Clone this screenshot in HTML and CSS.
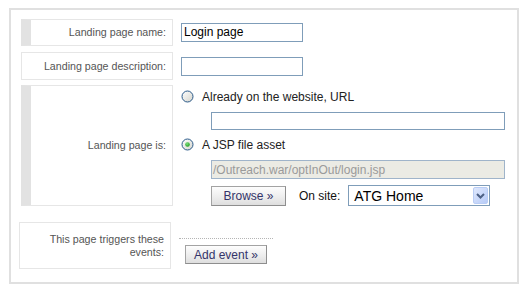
FILE: index.html
```html
<!DOCTYPE html>
<html>
<head>
<meta charset="utf-8">
<link rel="stylesheet" href="styles.css">
</head>
<body>
<div class="panel">
  <div class="row r1">
    <div class="label req">Landing page name:</div>
    <div class="field"><div class="input name">Login page</div></div>
  </div>
  <div class="row r2">
    <div class="label">Landing page description:</div>
    <div class="field"><div class="input name"></div></div>
  </div>
  <div class="row r3">
    <div class="label req">Landing page is:</div>
    <div class="field stack">
      <div class="radio-line">
        <svg class="radio" width="13" height="13" viewBox="0 0 13 13">
          <defs>
            <linearGradient id="rg1" x1="0" y1="0" x2="1" y2="1">
              <stop offset="0" stop-color="#ffffff"/>
              <stop offset="1" stop-color="#d4d4cc"/>
            </linearGradient>
          </defs>
          <circle cx="6.5" cy="6.5" r="5.5" fill="url(#rg1)" stroke="#2a5a8a" stroke-width="1"/>
        </svg>
        <span>Already on the website, URL</span>
      </div>
      <div class="input wide"></div>
      <div class="radio-line second">
        <svg class="radio" width="13" height="13" viewBox="0 0 13 13">
          <defs>
            <linearGradient id="rg2" x1="0" y1="0" x2="1" y2="1">
              <stop offset="0" stop-color="#ffffff"/>
              <stop offset="1" stop-color="#d4d4cc"/>
            </linearGradient>
            <radialGradient id="dot" cx="0.4" cy="0.35" r="0.7">
              <stop offset="0" stop-color="#7ee07e"/>
              <stop offset="1" stop-color="#1e9a1e"/>
            </radialGradient>
          </defs>
          <circle cx="6.5" cy="6.5" r="5.5" fill="url(#rg2)" stroke="#2a5a8a" stroke-width="1"/>
          <circle cx="6.5" cy="6.5" r="2.3" fill="url(#dot)"/>
        </svg>
        <span>A JSP file asset</span>
      </div>
      <div class="input wide disabled">/Outreach.war/optInOut/login.jsp</div>
      <div class="browse-line">
        <div class="btn browse">Browse &raquo;</div>
        <span class="onsite">On site:</span>
        <div class="select">
          <span class="sel-text">ATG Home</span>
          <span class="sel-btn">
            <svg width="9" height="6" viewBox="0 0 9 6"><path d="M1 1 L4.5 4.5 L8 1" fill="none" stroke="#4d6185" stroke-width="2"/></svg>
          </span>
        </div>
      </div>
    </div>
  </div>
  <div class="row r4">
    <div class="label">This page triggers these events:</div>
    <div class="field stack events">
      <div class="dots"></div>
      <div class="btn add">Add event &raquo;</div>
    </div>
  </div>
</div>
</body>
</html>
```
FILE: styles.css
```css
html, body {
  margin: 0;
  padding: 0;
  background: #ffffff;
}

body {
  font-family: "Liberation Sans", Arial, sans-serif;
  font-size: 12px;
  color: #222;
}

.panel {
  margin: 8px 11px 0 9px;
  border: 2px solid #e0e0e0;
  padding: 9px 10px 11px 10px;
  height: 252px;
  box-sizing: content-box;
}

.row {
  display: flex;
  align-items: stretch;
}

.r1 { height: 27px; }
.r2 { height: 28px; margin-top: 6px; }
.r3 { margin-top: 5px; }
.r4 { height: 47px; margin-top: 16px; margin-left: -2px; }

.label {
  width: 152px;
  flex: none;
  box-sizing: border-box;
  border: 1px solid #e6e6e6;
  display: flex;
  align-items: center;
  justify-content: flex-end;
  text-align: right;
  padding: 0 6px 0 8px;
  font-size: 10.67px;
  line-height: 13px;
  color: #555;
}

.label.req {
  border-left: 10px solid #e2e2e2;
}

.field {
  margin-left: 8px;
  display: flex;
  align-items: center;
}

.stack {
  flex-direction: column;
  align-items: flex-start;
}

.r3 .field {
  padding-top: 4px;
  height: 117px;
}

.input {
  box-sizing: border-box;
  height: 19px;
  border: 1px solid #7f9db9;
  background: #fff;
  font-size: 12px;
  line-height: 17px;
  padding: 0 2px;
  color: #000;
  white-space: nowrap;
  overflow: hidden;
}

.input.name {
  width: 122px;
}

.input.wide {
  width: 294px;
  margin-left: 30px;
  margin-top: 7px;
}

.input.disabled {
  background: #ebebe4;
  border-color: #9fb4ca;
  color: #9a9a9a;
  padding-left: 1px;
  height: 20px;
  line-height: 18px;
}

.radio-line {
  display: flex;
  align-items: center;
  height: 16px;
  font-size: 12px;
  color: #222;
}

.radio-line.second {
  margin-top: 7px;
}

.radio {
  display: block;
  margin-right: 8px;
}

.browse-line {
  display: flex;
  align-items: center;
  margin-left: 30px;
  margin-top: 6px;
  height: 21px;
}

.btn {
  box-sizing: border-box;
  display: flex;
  align-items: center;
  justify-content: center;
  border: 1px solid #a3a3a3;
  border-right-color: #8e8e8e;
  border-bottom-color: #8e8e8e;
  background: linear-gradient(#fdfdfd, #ececec 60%, #dedede);
  font-size: 12px;
  color: #34346a;
  white-space: nowrap;
}

.btn.browse {
  width: 75px;
  height: 20px;
}

.onsite {
  margin-left: 13px;
  color: #111;
}

.select {
  margin-left: 8px;
  width: 142px;
  height: 21px;
  box-sizing: border-box;
  border: 1px solid #7f9db9;
  display: flex;
  align-items: center;
  justify-content: space-between;
  background: #fff;
}

.sel-text {
  font-size: 14px;
  color: #000;
  padding-left: 5px;
}

.sel-btn {
  width: 15px;
  height: 17px;
  margin-right: 1px;
  box-sizing: border-box;
  border: 1px solid #b9cdf5;
  border-radius: 2px;
  background: linear-gradient(135deg, #dfe8fd, #b7cbf7);
  display: flex;
  align-items: center;
  justify-content: center;
}

.sel-btn svg {
  display: block;
}

.events {
  margin-left: 8px;
  padding-top: 16px;
}

.dots {
  width: 94px;
  height: 0;
  border-top: 1px dotted #b5b5b5;
}

.btn.add {
  width: 82px;
  height: 19px;
  margin-top: 6px;
  margin-left: 6px;
}
```
